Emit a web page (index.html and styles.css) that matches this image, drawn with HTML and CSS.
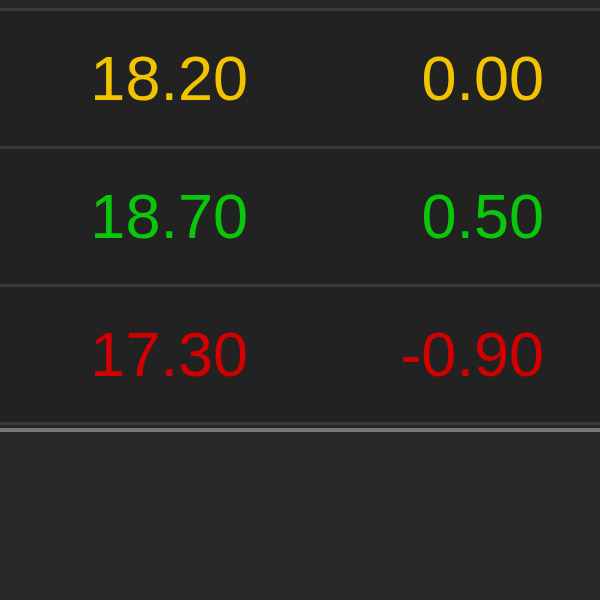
FILE: index.html
```html
<!DOCTYPE html>
<html>
<head>
<meta charset="utf-8">
<link rel="stylesheet" href="styles.css">
</head>
<body>
<div class="top"></div>
<div class="table">
  <div class="row flat">
    <span class="cell price">18.20</span>
    <span class="cell change">0.00</span>
  </div>
  <div class="row up">
    <span class="cell price">18.70</span>
    <span class="cell change">0.50</span>
  </div>
  <div class="row down">
    <span class="cell price">17.30</span>
    <span class="cell change">-0.90</span>
  </div>
</div>
<div class="footer-line"></div>
<div class="bottom"></div>
</body>
</html>
```

FILE: styles.css
```css
html, body {
  margin: 0;
  padding: 0;
  background: #282828;
  height: 100%;
}
body {
  font-family: "Liberation Sans", Arial, sans-serif;
}
.top {
  height: 8px;
  background: #252525;
}
.table {
  background: #3a3a3a;
  display: flex;
  flex-direction: column;
  gap: 3px;
  padding: 3px 0;
}
.row {
  height: 135px;
  background: #222222;
  display: flex;
  align-items: center;
  font-size: 63px;
  line-height: 1;
}
.cell {
  text-align: right;
  display: block;
}
.price {
  width: 248px;
}
.change {
  width: 296px;
}
.flat { color: #f2c300; }
.up { color: #0bc70b; }
.down { color: #d20000; }
.footer-line {
  height: 3px;
  background: #262626;
  border-bottom: 4px solid #767676;
}
```
